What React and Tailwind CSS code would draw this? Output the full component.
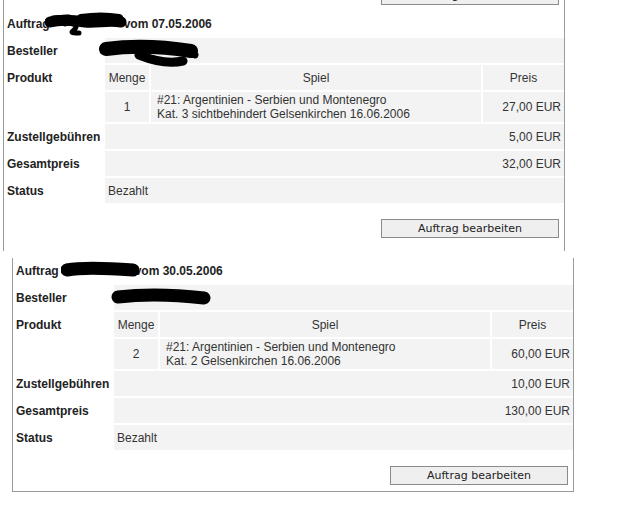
import React from 'react';

const orders = [
  {
    date: '07.05.2006',
    menge: '1',
    spiel: ['#21: Argentinien - Serbien und Montenegro', 'Kat. 3 sichtbehindert Gelsenkirchen 16.06.2006'],
    preis: '27,00 EUR',
    zustell: '5,00 EUR',
    gesamt: '32,00 EUR',
    status: 'Bezahlt',
  },
  {
    date: '30.05.2006',
    menge: '2',
    spiel: ['#21: Argentinien - Serbien und Montenegro', 'Kat. 2 Gelsenkirchen 16.06.2006'],
    preis: '60,00 EUR',
    zustell: '10,00 EUR',
    gesamt: '130,00 EUR',
    status: 'Bezahlt',
  },
];

// black marker strokes that hide the names
const NameScribble = () => (
  <svg width="82" height="24" viewBox="0 0 82 24" className="absolute left-[-5px] top-[-5px]">
    <g fill="none" stroke="#000" strokeLinecap="round" strokeLinejoin="round">
      <path d="M5,10 C16,7 28,8 40,10 C52,11 64,8 76,10" strokeWidth="11" />
      <path d="M36,6 C50,4 62,4 74,6" strokeWidth="8" />
      <path d="M20,12 C26,10 34,13 30,17 C27,20 24,21 34,21" strokeWidth="5" />
      <path d="M8,6 L24,5" strokeWidth="5" />
    </g>
  </svg>
);

const HeadScribble = () => (
  <svg width="78" height="20" viewBox="0 0 78 20" className="absolute left-0 top-[-4px]">
    <g fill="none" stroke="#000" strokeLinecap="round" strokeLinejoin="round">
      <path d="M6,10 C22,7 44,8 72,10" strokeWidth="13" />
      <path d="M10,6 L70,7" strokeWidth="6" />
    </g>
  </svg>
);

const BestellerScribble = ({ tail }) => (
  <svg width="106" height="30" viewBox="0 0 106 30" className="absolute left-[-6px] top-[1px]">
    <g fill="none" stroke="#000" strokeLinecap="round" strokeLinejoin="round">
      {tail ? (
        <>
          <path d="M7,10 C30,7 60,7 92,12" strokeWidth="14" />
          <path d="M40,16 C55,22 70,25 84,22" strokeWidth="9" />
          <path d="M86,13 L96,16" strokeWidth="7" />
        </>
      ) : (
        <path d="M10,11 C34,8 62,8 96,12" strokeWidth="13" />
      )}
    </g>
  </svg>
);

const Label = ({ children }) => (
  <div className="h-[25px] flex items-center pl-[3px] font-bold text-[#222]">{children}</div>
);

const Cell = ({ children, className = '' }) => (
  <div className={`bg-[#f3f3f3] flex items-center ${className}`}>{children}</div>
);

const EditButton = () => (
  <div className="flex justify-end pr-[5px]">
    <button className="w-[178px] h-[19px] bg-[#efefef] border border-[#8a8a8a] text-[11px] text-[#222] leading-none font-['DejaVu_Sans',sans-serif]">
      Auftrag bearbeiten
    </button>
  </div>
);

const OrderRows = ({ order, first }) => (
  <div className="flex flex-col gap-[2px]">
    <div className="h-[25px] flex items-center pl-[3px] font-bold text-[#222]">
      <span>Auftrag</span>
      <span className={`relative inline-block h-[14px] ${first ? 'w-[74px]' : 'w-[74px] ml-[2px]'}`}>
        {first ? <NameScribble /> : <HeadScribble />}
      </span>
      <span>vom {order.date}</span>
    </div>

    <div className="grid grid-cols-[99px_1fr] gap-x-[2px]">
      <Label>Besteller</Label>
      <Cell className="h-[25px] relative">
        <BestellerScribble tail={first} />
      </Cell>
    </div>

    <div className="grid grid-cols-[99px_1fr] gap-x-[2px]">
      <Label>Produkt</Label>
      <div className="grid grid-cols-[44px_1fr_81px] gap-[2px]">
        <Cell className="h-[25px] justify-center">Menge</Cell>
        <Cell className="h-[25px] justify-center">Spiel</Cell>
        <Cell className="h-[25px] justify-center">Preis</Cell>
        <Cell className="h-[30px] justify-center">{order.menge}</Cell>
        <Cell className="h-[30px] pl-[6px] leading-[14px]">
          <div>
            {order.spiel.map((line) => (
              <div key={line}>{line}</div>
            ))}
          </div>
        </Cell>
        <Cell className="h-[30px] justify-end pr-[3px]">{order.preis}</Cell>
      </div>
    </div>

    <div className="grid grid-cols-[99px_1fr] gap-x-[2px]">
      <Label>Zustellgebühren</Label>
      <Cell className="h-[25px] justify-end pr-[3px]">{order.zustell}</Cell>
    </div>

    <div className="grid grid-cols-[99px_1fr] gap-x-[2px]">
      <Label>Gesamtpreis</Label>
      <Cell className="h-[25px] justify-end pr-[3px]">{order.gesamt}</Cell>
    </div>

    <div className="grid grid-cols-[99px_1fr] gap-x-[2px]">
      <Label>Status</Label>
      <Cell className="h-[25px] pl-[3px]">{order.status}</Cell>
    </div>
  </div>
);

export default function App() {
  return (
    <div className="w-[640px] h-[512px] bg-white overflow-hidden text-[12px] text-[#333] font-['Liberation_Sans',Arial,sans-serif]">
      {/* first order, top cut off */}
      <div className="ml-[3px] w-[562px] h-[251px] flex flex-col border-x border-[#9a9a9a]">
        <div className="mt-[-14px] mb-[6px]">
          <EditButton />
        </div>
        <OrderRows order={orders[0]} first />
        <div className="mt-[16px]">
          <EditButton />
        </div>
      </div>

      {/* second order */}
      <div className="mt-[7px] ml-[12px] w-[562px] flex flex-col border-x border-b border-[#9a9a9a] pb-[6px]">
        <OrderRows order={orders[1]} />
        <div className="mt-[16px]">
          <EditButton />
        </div>
      </div>
    </div>
  );
}
